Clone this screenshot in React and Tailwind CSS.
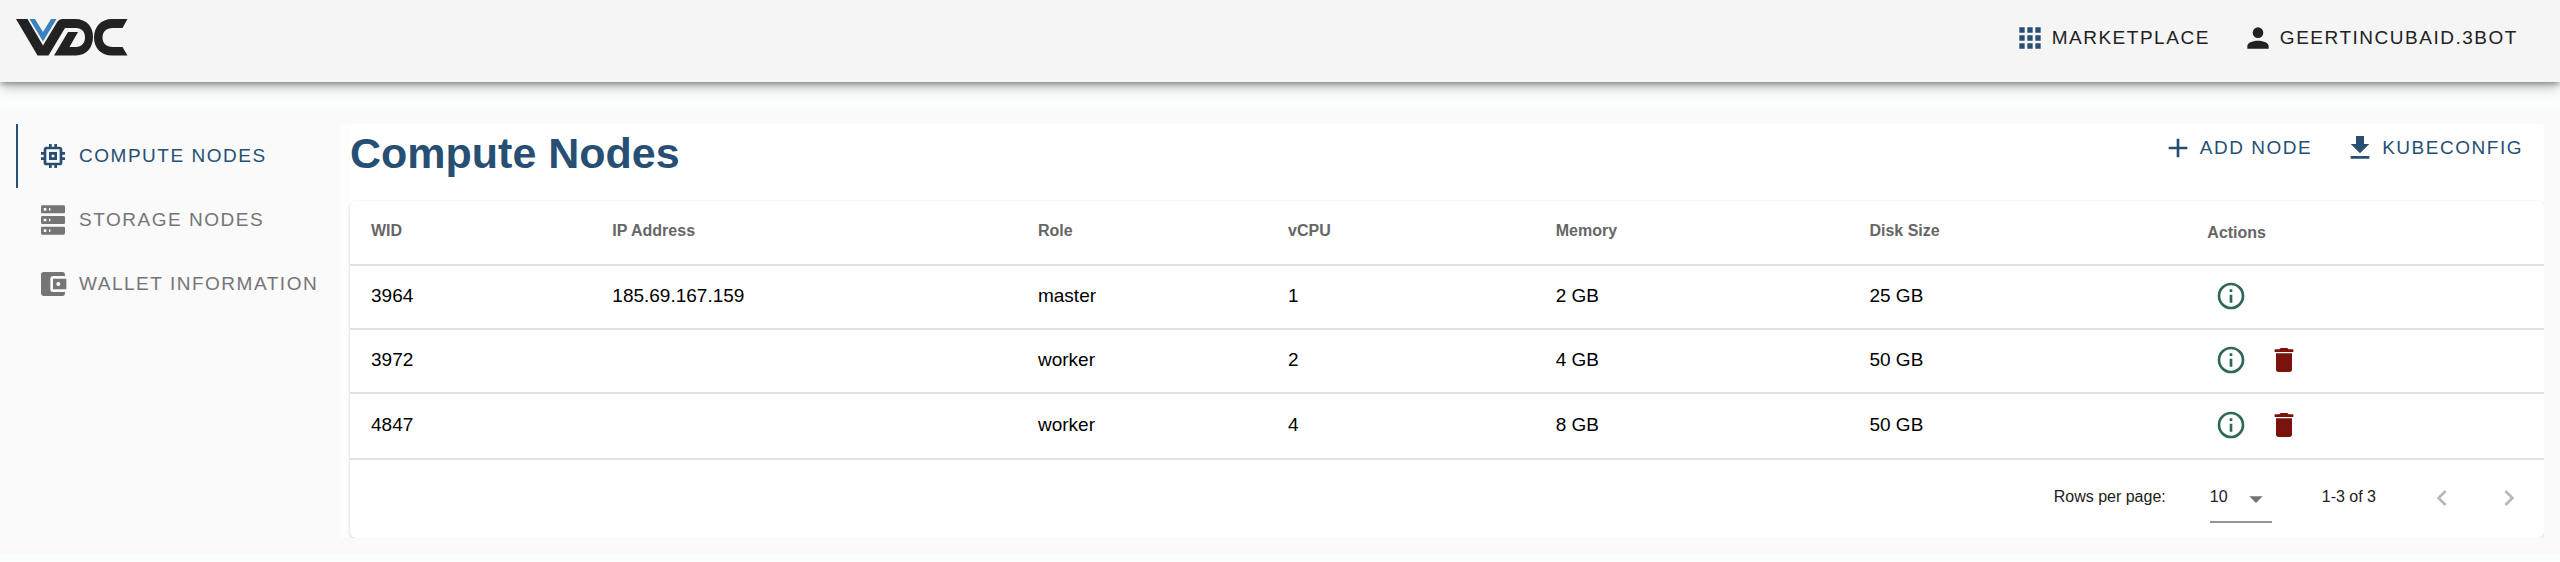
const ICONS = {
  apps: "M16,20H20V16H16M16,14H20V10H16M10,8H14V4H10M16,8H20V4H16M10,14H14V10H10M4,14H8V10H4M4,20H8V16H4M10,20H14V16H10M4,8H8V4H4V8Z",
  account: "M12,4A4,4 0 0,1 16,8A4,4 0 0,1 12,12A4,4 0 0,1 8,8A4,4 0 0,1 12,4M12,14C16.42,14 20,15.79 20,18V20H4V18C4,15.79 7.58,14 12,14Z",
  memory: "M17,17H7V7H17M21,11V9H19V7C19,5.89 18.1,5 17,5H15V3H13V5H11V3H9V5H7C5.89,5 5,5.89 5,7V9H3V11H5V13H3V15H5V17A2,2 0 0,0 7,19H9V21H11V19H13V21H15V19H17A2,2 0 0,0 19,17V15H21V13H19V11M13,13H11V11H13M15,9H9V15H15V9Z",
  server: "M4,1H20A1,1 0 0,1 21,2V6A1,1 0 0,1 20,7H4A1,1 0 0,1 3,6V2A1,1 0 0,1 4,1M4,9H20A1,1 0 0,1 21,10V14A1,1 0 0,1 20,15H4A1,1 0 0,1 3,14V10A1,1 0 0,1 4,9M4,17H20A1,1 0 0,1 21,18V22A1,1 0 0,1 20,23H4A1,1 0 0,1 3,22V18A1,1 0 0,1 4,17M9,5H10V3H9V5M9,13H10V11H9V13M9,21H10V19H9V21M5,3V5H7V3H5M5,11V13H7V11H5M5,19V21H7V19H5Z",
  wallet: "M21,18V19A2,2 0 0,1 19,21H5C3.89,21 3,20.1 3,19V5A2,2 0 0,1 5,3H19A2,2 0 0,1 21,5V6H12C10.89,6 10,6.9 10,8V16A2,2 0 0,0 12,18M12,16H22V8H12M16,13.5A1.5,1.5 0 0,1 14.5,12A1.5,1.5 0 0,1 16,10.5A1.5,1.5 0 0,1 17.5,12A1.5,1.5 0 0,1 16,13.5Z",
  plus: "M19,13H13V19H11V13H5V11H11V5H13V11H19V13Z",
  download: "M5,20H19V18H5M19,9H15V3H9V9H5L12,16L19,9Z",
  info: "M11,9H13V7H11M12,20C7.59,20 4,16.41 4,12C4,7.59 7.59,4 12,4C16.41,4 20,7.59 20,12C20,16.41 16.41,20 12,20M12,2A10,10 0 0,0 2,12A10,10 0 0,0 12,22A10,10 0 0,0 22,12A10,10 0 0,0 12,2M11,17H13V11H11V17Z",
  trash: "M19,4H15.5L14.5,3H9.5L8.5,4H5V6H19M6,19A2,2 0 0,0 8,21H16A2,2 0 0,0 18,19V7H6V19Z",
  left: "M15.41,16.58L10.83,12L15.41,7.41L14,6L8,12L14,18L15.41,16.58Z",
  right: "M8.59,16.58L13.17,12L8.59,7.41L10,6L16,12L10,18L8.59,16.58Z",
  caret: "M7,10L12,15L17,10H7Z",
};

function Icon({ name, className = "size-8" }) {
  return (
    <svg viewBox="0 0 24 24" fill="currentColor" aria-hidden="true" className={`shrink-0 ${className}`}>
      <path d={ICONS[name]} />
    </svg>
  );
}

function Logo() {
  return (
    <svg viewBox="0 0 112 38" role="img" aria-label="VDC" className="h-[38px] w-28">
      <path fill="#222" d="M0 0H11.500L27 26.500L41.500 2.500Q43 0 46 0H59C71 0 77 8 77 18C77 28 71 36.500 60 36.500H38L52 13H62L53.500 28H60C65.500 28 69 24 69 18.500C69 12.500 65.500 9 60 9H49L32.500 36.500H21.500Z" />
      <path fill="#3b82bd" d="M13.500 0H19L27 13L35 0H40.500L27 22.500Z" />
      <path fill="#222" d="M111.500 0L106.500 9H97C90 9 86.500 13 86.500 18.500C86.500 24 90 28 97 28H106.500L111.500 36.500H96C85 36.500 78 29 78 18.500C78 8 85 0 96 0Z" />
    </svg>
  );
}

function TextButton({ icon, iconClass = "", children }) {
  return (
    <button type="button" className="flex h-12 items-center gap-[6px] text-[19px] tracking-[0.08em] uppercase">
      <Icon name={icon} className={`size-8 ${iconClass}`} />
      {children}
    </button>
  );
}

const TABS = [
  { icon: "memory", label: "Compute Nodes", active: true },
  { icon: "server", label: "Storage Nodes" },
  { icon: "wallet", label: "Wallet Information" },
];

const COLUMNS = [
  ["WID", "w-[11%] pb-[3px]"],
  ["IP Address", "w-[19.4%] pb-[3px]"],
  ["Role", "w-[11.4%] pb-[3px]"],
  ["vCPU", "w-[12.2%] pb-[3px]"],
  ["Memory", "w-[14.3%] pb-[3px]"],
  ["Disk Size", "w-[15.4%] pb-[3px]"],
  ["Actions", "w-[16.3%]"],
];

const ROWS = [
  { cells: ["3964", "185.69.167.159", "master", "1", "2 GB", "25 GB"], removable: false },
  { cells: ["3972", "", "worker", "2", "4 GB", "50 GB"], removable: true },
  { cells: ["4847", "", "worker", "4", "8 GB", "50 GB"], removable: true },
];

export default function App() {
  return (
    <div className="flex min-h-screen flex-col bg-[#fafefd] font-['Liberation_Sans',Arial,sans-serif] text-[#212121]">
      <header className="relative z-10 flex h-[82px] items-center justify-between bg-[#f5f5f5] pb-[6px] pl-4 pr-[42px] shadow-[0_3px_5px_-1px_rgba(0,0,0,0.3),0_5px_13px_0_rgba(0,0,0,0.2),0_1px_13px_0_rgba(0,0,0,0.12)]">
        <a href="#home"><Logo /></a>
        <div className="flex gap-8">
          <TextButton icon="apps" iconClass="text-[#274f73]">Marketplace</TextButton>
          <TextButton icon="account">geertincubaid.3bot</TextButton>
        </div>
      </header>

      <div className="mt-[26px] flex bg-[#fafafa] py-4 pl-4 pr-4">
        <nav className="w-[324px] shrink-0">
          {TABS.map((t) => (
            <a
              key={t.label}
              href="#nodes"
              className={`flex h-16 items-center gap-[10px] border-l-2 pl-[19px] text-[19px] tracking-[0.08em] whitespace-nowrap uppercase ${
                t.active ? "border-[#274f73] text-[#274f73]" : "border-transparent text-[#757575]"
              }`}
            >
              <Icon name={t.icon} />
              {t.label}
            </a>
          ))}
        </nav>

        <main className="min-w-0 grow overflow-hidden bg-[#fcfefd] pl-[10px]">
          <div className="rounded-md bg-white">
            <div className="flex h-[77px] items-start justify-between">
              <h1 className="pt-[5px] text-[43px] leading-[48px] font-bold text-[#274f73]">Compute Nodes</h1>
              <div className="flex gap-8 pr-[21px] text-[#274f73]">
                <TextButton icon="plus">Add node</TextButton>
                <TextButton icon="download">Kubeconfig</TextButton>
              </div>
            </div>

            <div className="rounded-md bg-white shadow-[0_1px_3px_rgba(0,0,0,0.2)]">
              <table className="w-full table-fixed border-collapse text-left">
                <thead>
                  <tr className="h-16 border-b-2 border-[#e0e0e0]">
                    {COLUMNS.map(([label, width]) => (
                      <th key={label} className={`px-[21px] text-[16px] font-bold text-[#666] ${width}`}>{label}</th>
                    ))}
                  </tr>
                </thead>
                <tbody>
                  {ROWS.map((r) => (
                    <tr key={r.cells[0]} className="h-16 border-b-2 border-[#e0e0e0] text-[19px] text-black last:h-[66px]">
                      {r.cells.map((c, i) => (
                        <td key={i} className="px-[21px] pb-[2px]">{c}</td>
                      ))}
                      <td className="px-[29px] pb-[2px]">
                        <div className="flex items-center gap-[21px]">
                          <button type="button" aria-label="Details" className="text-[#2f6759]"><Icon name="info" /></button>
                          {r.removable && (
                            <button type="button" aria-label="Delete" className="text-[#7a130c]"><Icon name="trash" /></button>
                          )}
                        </div>
                      </td>
                    </tr>
                  ))}
                </tbody>
              </table>

              <div className="flex h-[78px] items-center justify-end pr-[19px] pb-[5px] text-[16px]">
                <label htmlFor="rows">Rows per page:</label>
                <div className="relative ml-11 mt-2 w-[62px] border-b-2 border-[#949494]">
                  <select id="rows" defaultValue="10" className="h-[42px] w-full appearance-none bg-transparent pb-[6px] outline-none">
                    <option>10</option>
                    <option>25</option>
                  </select>
                  <span className="pointer-events-none absolute top-1 right-0 text-[#757575]">
                    <Icon name="caret" />
                  </span>
                </div>
                <span className="ml-[50px]">1-3 of 3</span>
                <div className="ml-[50px] flex gap-[35px] pt-[2px] text-[#b8b8b8]">
                  <button type="button" disabled aria-label="Previous page"><Icon name="left" /></button>
                  <button type="button" disabled aria-label="Next page"><Icon name="right" /></button>
                </div>
              </div>
            </div>
          </div>
        </main>
      </div>
    </div>
  );
}
